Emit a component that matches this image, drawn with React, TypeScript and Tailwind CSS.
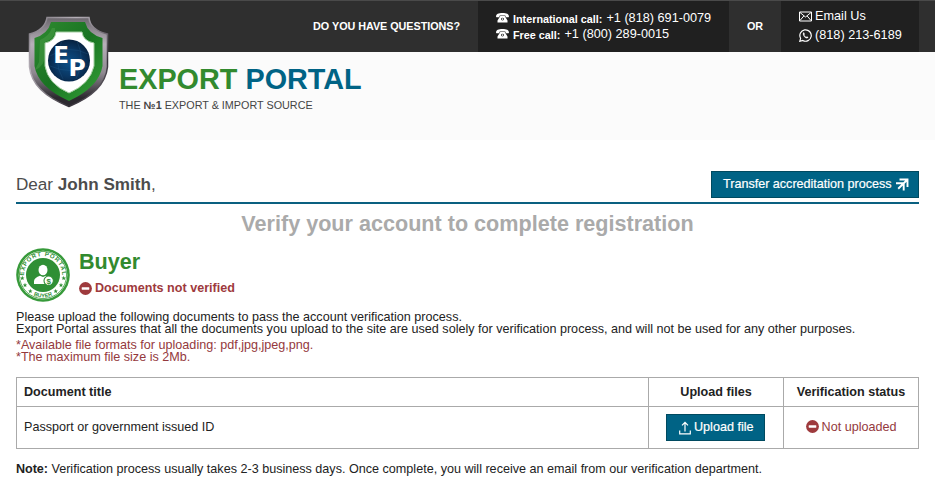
import type { ReactNode } from "react";

function Shield() {
  return (
    <svg className="mt-[16px] ml-[28px] h-[92px] w-[81px] shrink-0" viewBox="0 0 81 92">
      <defs>
        <linearGradient id="metal" x1="0" y1="0" x2="1" y2="1">
          <stop offset="0" stopColor="#77727a" />
          <stop offset=".3" stopColor="#b5afb7" />
          <stop offset=".55" stopColor="#77717a" />
          <stop offset=".75" stopColor="#343038" />
          <stop offset="1" stopColor="#8b858d" />
        </linearGradient>
        <linearGradient id="metalSide" x1="0" y1="0" x2="0" y2="1">
          <stop offset="0" stopColor="#6b676d" />
          <stop offset=".3" stopColor="#b7b0b9" />
          <stop offset=".62" stopColor="#8f8991" />
          <stop offset=".9" stopColor="#2c292f" />
        </linearGradient>
        <linearGradient id="green" x1="0" y1="0" x2="1" y2="1">
          <stop offset="0" stopColor="#2f8b31" />
          <stop offset=".5" stopColor="#197322" />
          <stop offset="1" stopColor="#35a338" />
        </linearGradient>
        <radialGradient id="globe" cx=".5" cy=".55" r=".55">
          <stop offset="0" stopColor="#0b4f87" />
          <stop offset=".6" stopColor="#0a3763" />
          <stop offset="1" stopColor="#07213f" />
        </radialGradient>
      </defs>
      <path d="M19 1.500H61Q62 14 79.500 18V51Q77 76 41 90.500Q4 76 1.500 51V18Q17 14 19 1.500Z" fill="url(#metalSide)" stroke="url(#metal)" strokeWidth="1.500" />
      <path d="M23 6H57Q60 18 74.500 22V50Q71 71 41 85Q10 71 6.500 50V22Q20 18 23 6Z" fill="url(#green)" />
      <path d="M7 54Q17 50 17 39V26Q26 23 27 15V12H24Q21 20 12 24L11 46Z" fill="#55a650" opacity=".4" />
      <path d="M28 16H54Q55 25 66 27V50Q62 68 41 77Q20 68 17 50V27Q27 25 28 16Z" fill="#fff" stroke="#a3cda1" />
      <circle cx="41" cy="44.500" r="21" fill="url(#globe)" />
      <path d="M22 40Q40 28 60 38M22 50Q42 59 60 50M34 25Q24 44 35 63M49 25Q58 44 48 63" fill="none" stroke="#2c6899" strokeWidth=".5" opacity=".5" />
      <text x="25.200" y="47.300" fontSize="23" fontWeight="700" className="font-['DejaVu_Sans',sans-serif]" fill="#fff">E</text>
      <text x="40.500" y="59.500" fontSize="23.500" fontWeight="700" className="font-['DejaVu_Sans',sans-serif]" fill="#fff">P</text>
    </svg>
  );
}

function Phone() {
  return (
    <svg className="mt-[3px] mr-1 h-[10px] w-[13px] shrink-0" viewBox="0 0 13 10" fill="#fff">
      <path d="M0 3.500C0 1 2.500 0 6.500 0S13 1 13 3.500L12.600 4.300H9.800L9.300 2.500H3.700L3.200 4.300H.4Z" />
      <path fillRule="evenodd" d="M4.300 3H8.700L11.500 7.500V9.500H1.500V7.500ZM6.500 4.700A1.500 1.400 0 1 0 6.500 7.500A1.500 1.400 0 1 0 6.500 4.700Z" />
      <circle cx="6.500" cy="6.100" r=".8" />
    </svg>
  );
}

function Minus() {
  return (
    <svg className="size-[13px] shrink-0" viewBox="0 0 13 13">
      <circle cx="6.500" cy="6.500" r="6.400" fill="#9e3a3d" />
      <rect x="2.700" y="5.300" width="7.600" height="2.400" rx=".4" fill="#fff" />
    </svg>
  );
}

const STARS = [[6.300, 30], [9, 37], [14.300, 43], [39.700, 43], [45, 37], [47.700, 30]];

function BuyerBadge() {
  return (
    <svg className="size-[54px] shrink-0" viewBox="0 0 54 54">
      <defs>
        <path id="arcTop" d="M10.100 36.500A19.200 19.200 0 1 1 43.900 36.500" />
        <path id="arcBottom" d="M11 43A23 23 0 0 0 43 43" />
      </defs>
      <circle cx="27" cy="27" r="26.800" fill="#379a3a" />
      <circle cx="27" cy="27" r="24.300" fill="#fff" />
      <circle cx="27" cy="27" r="23.600" fill="none" stroke="#379a3a" strokeWidth=".8" />
      <circle cx="27" cy="27" r="17" fill="#2f8f35" />
      <g className="font-['Liberation_Sans',sans-serif]" fontSize="6" fontWeight="700" fill="#2f8f35">
        <text letterSpacing=".8"><textPath href="#arcTop" startOffset="50%" textAnchor="middle">EXPORT PORTAL</textPath></text>
        <text fontSize="5.500"><textPath href="#arcBottom" startOffset="50%" textAnchor="middle">BUYER</textPath></text>
      </g>
      {STARS.map(([x, y]) => (
        <path key={`${x}-${y}`} transform={`translate(${x} ${y})`} d="M0-2.200L.6-.6 2.200-.5 1 .500 1.400 2.100 0 1.200-1.400 2.100-1 .500-2.200-.5-.6-.6Z" fill="#2f8f35" />
      ))}
      <ellipse cx="27" cy="22" rx="4.500" ry="5.200" fill="#fff" />
      <path d="M18 36V33Q18.500 29.500 24 27.800L27 29 30 27.800Q34 29 35 31V36Z" fill="#fff" />
      <circle cx="32.700" cy="32.700" r="4.700" fill="#fff" stroke="#2f8f35" strokeWidth="1.100" />
      <text x="32.700" y="35.500" textAnchor="middle" fontSize="8" fontWeight="700" className="font-['Liberation_Sans',sans-serif]" fill="#2f8f35">$</text>
    </svg>
  );
}

function Button({ className, children }: { className: string; children: ReactNode }) {
  return (
    <button className={`flex h-[27px] items-center border border-[#004a60] bg-[#006385] leading-[25px] whitespace-nowrap text-white [-webkit-text-stroke:0.2px_white] ${className}`}>
      {children}
    </button>
  );
}

export default function App() {
  return (
    <div className="h-[488px] w-[935px] overflow-hidden bg-white font-['Liberation_Sans',Arial,sans-serif] text-[12.6px] text-[#222]">
      <header className="h-[140px] bg-[#fbfbfb]">
        <div className="flex h-[52px] border-t border-[#4a4a4a] bg-[#2f2f2f] pr-4 text-white">
          <div className="w-[478px] pr-[18px] text-right text-[10.8px] leading-[51px] font-bold tracking-[-0.04px]">DO YOU HAVE QUESTIONS?</div>
          <div className="w-[251px] bg-[#202020] pt-[9px] pl-[18px] text-[12.7px] leading-4 whitespace-nowrap">
            <div className="flex h-4"><Phone /><b className="mr-1 pt-px text-[10.8px] leading-4">International call:</b>+1 (818) 691-0079</div>
            <div className="flex h-4"><Phone /><b className="mr-1 pt-px text-[10.8px] leading-4">Free call:</b>+1 (800) 289-0015</div>
          </div>
          <div className="w-[52px] text-center text-[10.8px] leading-[51px] font-bold">OR</div>
          <div className="w-[138px] bg-[#202020] pt-[6px] pl-[18px] text-[12.7px] leading-[19px] whitespace-nowrap">
            <div className="flex items-center">
              <svg className="mr-[3px] h-[11px] w-[13px]" viewBox="0 0 13 11" fill="none" stroke="#fff"><path d="M.5 1H12.500V10H.5ZM1 1.500L6.500 6 12 1.500M1 9.500L4.800 5M12 9.500L8.200 5" /></svg>
              Email Us
            </div>
            <div className="flex items-center">
              <svg className="mr-[3px] size-[13px]" viewBox="0 0 13 13" fill="none" stroke="#fff"><path d="M.8 12.300L1.600 9.300A5.700 5.700 0 1 1 3.800 11.500Z" strokeWidth="1.200" /><path d="M4.500 3.600C3.300 5 4.800 7.500 6 8.400S8.700 9.500 9.200 8.200L7.900 7.500 7.200 8.200Q5.800 7.500 5.100 6L5.600 5.200 5.100 3.800Z" fill="#fff" strokeWidth=".3" /></svg>
              (818) 213-6189
            </div>
          </div>
        </div>
        <div className="-mt-[52px] flex">
          <Shield />
          <div className="pt-[61px] pl-[10px]">
            <h1 className="text-[28.8px] leading-9 font-bold text-[#006385]"><span className="text-[#328a2e]">EXPORT</span> PORTAL</h1>
            <p className="pt-[2px] text-[10.8px] leading-3 text-[#444]">THE <b>№1</b> EXPORT &amp; IMPORT SOURCE</p>
          </div>
        </div>
      </header>

      <main className="mx-4">
        <div className="flex h-16 items-start justify-between border-b-2 border-[#0a6080] pt-[31px]">
          <p className="pt-px text-[17.1px] leading-[26px] text-[#4c4c4c]">Dear <b>John Smith</b>,</p>
          <Button className="w-[208px] pl-[11px]">
            <span className="tracking-[-0.01px]">Transfer accreditation process</span>
            <svg className="ml-1 size-[13px]" viewBox="0 0 13 13" fill="none" stroke="#fff" strokeWidth="1.900"><path d="M3.500 1.500H11.500V9M0 5.300H7.700V12.500M2.200 10.700L11.500 1.500" /></svg>
          </Button>
        </div>
        <h2 className="h-11 pt-2 text-center text-[21.6px] leading-6 font-bold text-[#aaa]">Verify your account to complete registration</h2>
        <section className="flex">
          <BuyerBadge />
          <div className="pl-[9px]">
            <h3 className="text-[21.6px] leading-[27px] font-bold text-[#328a2e]">Buyer</h3>
            <div className="flex items-center gap-[3px] pt-[5px] leading-4 font-bold text-[#9e3a3d]"><Minus />Documents not verified</div>
          </div>
        </section>
        <p className="mt-[9px] leading-3 whitespace-nowrap">Please upload the following documents to pass the account verification process.<br />Export Portal assures that all the documents you upload to the site are used solely for verification process, and will not be used for any other purposes.</p>
        <p className="mt-1 leading-3 text-[#94393d]">*Available file formats for uploading: pdf,jpg,jpeg,png.<br />*The maximum file size is 2Mb.</p>

        <table className="mt-[14px] w-[902px] table-fixed border-collapse [&_td]:border [&_td]:border-[#aaa] [&_th]:border [&_th]:border-[#aaa]">
          <colgroup><col className="w-[632px]" /><col className="w-[135px]" /><col className="w-[135px]" /></colgroup>
          <thead>
            <tr className="h-[29px] leading-5"><th className="p-0 pl-[7px] text-left">Document title</th><th className="p-0">Upload files</th><th className="p-0">Verification status</th></tr>
          </thead>
          <tbody>
            <tr className="h-[42px]">
              <td className="p-0 pl-[7px]">Passport or government issued ID</td>
              <td className="p-0">
                <Button className="ml-[17px] w-[99px] pl-[12px]">
                  <svg className="mr-[3px] h-[14px] w-3" viewBox="0 0 12 14" fill="none" stroke="#fff" strokeWidth="1.200"><path d="M6 10.500V1.500M3 4.300L6 1.300 9 4.300M.7 9.500V12.900H11.300V9.500" /></svg>
                  Upload file
                </Button>
              </td>
              <td className="p-0 pb-px"><div className="flex items-center justify-center gap-[3px] text-[#94393d]"><Minus />Not uploaded</div></td>
            </tr>
          </tbody>
        </table>
        <p className="mt-3 leading-4"><b className="tracking-[-0.05px]">Note:</b> Verification process usually takes 2-3 business days. Once complete, you will receive an email from our verification department.</p>
      </main>
    </div>
  );
}
